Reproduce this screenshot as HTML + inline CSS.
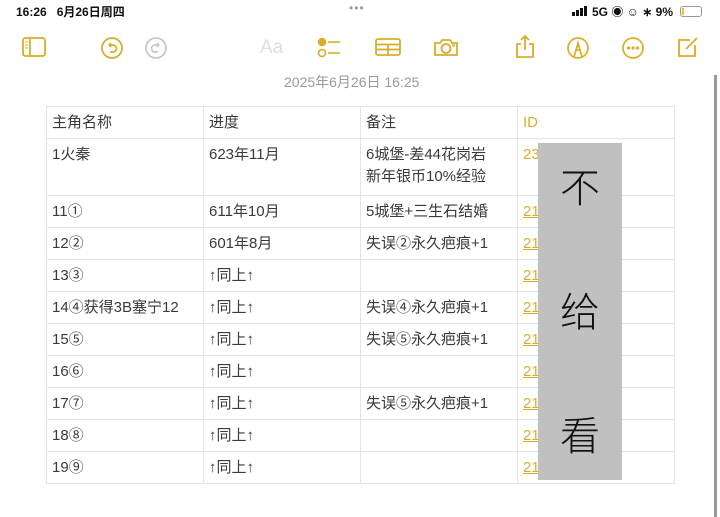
<!DOCTYPE html>
<html><head><meta charset="utf-8"><style>
*{margin:0;padding:0;box-sizing:border-box}
body{width:720px;height:517px;background:#fff;position:relative;overflow:hidden;font-family:"Liberation Sans","Noto Sans CJK SC",sans-serif;color:#333}
.abs{position:absolute}
table{position:absolute;left:46px;top:106px;border-collapse:collapse;font-size:15px;table-layout:fixed;width:628px}
td{border:1px solid #e4e4e4;width:157px;vertical-align:top;padding:5px 5px 0 5px;height:32px;line-height:22px;color:#3a3a3a}
td.id{color:#d9ad2a}
td.id u{text-decoration:underline;text-decoration-color:#d9ad2a}
svg{position:absolute}
</style></head><body>
<div class="abs" style="left:16px;top:3px;font-size:12px;font-weight:bold;color:#111">16:26&nbsp;&nbsp; 6月26日周四</div>
<div class="abs" style="left:349px;top:1px;font-size:12px;color:#999;letter-spacing:1px">•••</div>
<svg style="left:572px;top:6px" width="17" height="10" viewBox="0 0 17 10" fill="#111"><rect x="0" y="6" width="3" height="4"/><rect x="4" y="4" width="3" height="6"/><rect x="8" y="2" width="3" height="8"/><rect x="12" y="0" width="3" height="10"/></svg>
<div class="abs" style="left:592px;top:3px;font-size:12px;font-weight:bold;color:#111">5G ◉ ☺ ∗ 9%</div>
<div class="abs" style="left:680px;top:6px;width:22px;height:11px;border:1px solid #999;border-radius:3px"><div style="width:2px;height:7px;margin:1px;background:#f0c020"></div></div>
<svg style="left:20px;top:36px" width="28" height="22" viewBox="0 0 28 22" fill="none" stroke="#d9ad2a" stroke-width="1.8"><rect x="3" y="2" width="22" height="18" rx="2.5"/><line x1="10" y1="2" x2="10" y2="20"/><line x1="5" y1="6" x2="8" y2="6" stroke-width="1"/><line x1="5" y1="9" x2="8" y2="9" stroke-width="1"/><line x1="5" y1="12" x2="8" y2="12" stroke-width="1"/></svg>
<svg style="left:100px;top:36px" width="24" height="24" viewBox="0 0 24 24" fill="none" stroke="#d9ad2a" stroke-width="1.8"><circle cx="12" cy="12" r="10"/><path d="M9 9h4a3.5 3.5 0 0 1 0 7h-3M9 9l2-2M9 9l2 2"/></svg>
<svg style="left:144px;top:36px" width="24" height="24" viewBox="0 0 24 24" fill="none" stroke="#c8c8c8" stroke-width="1.8"><circle cx="12" cy="12" r="10"/><path d="M15 9h-4a3.5 3.5 0 0 0 0 7h3M15 9l-2-2M15 9l-2 2"/></svg>
<div class="abs" style="left:260px;top:37px;font-size:19px;color:#ddd">Aa</div>
<svg style="left:316px;top:36px" width="28" height="24" viewBox="0 0 28 24" fill="none" stroke="#d9ad2a" stroke-width="1.6"><circle cx="6" cy="6" r="3.5" fill="#d9ad2a"/><circle cx="6" cy="17" r="3.5"/><line x1="12" y1="6" x2="24" y2="6"/><line x1="12" y1="17" x2="24" y2="17"/></svg>
<svg style="left:374px;top:36px" width="28" height="22" viewBox="0 0 28 22" fill="none" stroke="#d9ad2a" stroke-width="1.8"><rect x="2" y="3" width="24" height="16" rx="2"/><line x1="2" y1="8.5" x2="26" y2="8.5"/><line x1="2" y1="13.5" x2="26" y2="13.5"/><line x1="14" y1="8.5" x2="14" y2="19"/></svg>
<svg style="left:432px;top:36px" width="28" height="22" viewBox="0 0 28 22" fill="none" stroke="#d9ad2a" stroke-width="1.8"><path d="M3 7h5l2-3h8l2 3h5v12H3z"/><circle cx="14" cy="12.5" r="4.5"/><circle cx="21.5" cy="9.5" r=".5"/></svg>
<svg style="left:514px;top:34px" width="22" height="26" viewBox="0 0 22 26" fill="none" stroke="#d9ad2a" stroke-width="1.8"><path d="M7 10H3v13h16V10h-4M11 2v14M7 6l4-4 4 4"/></svg>
<svg style="left:566px;top:36px" width="24" height="24" viewBox="0 0 24 24" fill="none" stroke="#d9ad2a" stroke-width="1.7"><circle cx="12" cy="12" r="10"/><path d="M8 21l4-14 4 14M10 14h4"/></svg>
<svg style="left:621px;top:36px" width="24" height="24" viewBox="0 0 24 24" fill="none" stroke="#d9ad2a" stroke-width="1.7"><circle cx="12" cy="12" r="10"/><circle cx="7.5" cy="12" r=".8" fill="#d9ad2a"/><circle cx="12" cy="12" r=".8" fill="#d9ad2a"/><circle cx="16.5" cy="12" r=".8" fill="#d9ad2a"/></svg>
<svg style="left:676px;top:34px" width="24" height="26" viewBox="0 0 24 26" fill="none" stroke="#d9ad2a" stroke-width="1.8"><path d="M14 6H3v16h16V11"/><path d="M10 15L21 4"/></svg>
<div class="abs" style="left:284px;top:72px;font-size:14px;color:#999">2025年6月26日 16:25</div>
<div class="abs" style="left:714px;top:75px;width:3px;height:442px;background:#999"></div>
<table>
<tr><td>主角名称</td><td>进度</td><td>备注</td><td class="id">ID</td></tr>
<tr><td style="height:57px">1火秦</td><td>623年11月</td><td>6城堡-差44花岗岩<br>新年银币10%经验</td><td class="id">23</td></tr>
<tr><td>11①</td><td>611年10月</td><td>5城堡+三生石结婚</td><td class="id"><u>21</u></td></tr>
<tr><td>12②</td><td>601年8月</td><td>失误②永久疤痕+1</td><td class="id"><u>21</u></td></tr>
<tr><td>13③</td><td>↑同上↑</td><td></td><td class="id"><u>21</u></td></tr>
<tr><td>14④获得3B塞宁12</td><td>↑同上↑</td><td>失误④永久疤痕+1</td><td class="id"><u>21</u></td></tr>
<tr><td>15⑤</td><td>↑同上↑</td><td>失误⑤永久疤痕+1</td><td class="id"><u>21</u></td></tr>
<tr><td>16⑥</td><td>↑同上↑</td><td></td><td class="id"><u>21</u></td></tr>
<tr><td>17⑦</td><td>↑同上↑</td><td>失误⑤永久疤痕+1</td><td class="id"><u>21</u></td></tr>
<tr><td>18⑧</td><td>↑同上↑</td><td></td><td class="id"><u>21</u></td></tr>
<tr><td>19⑨</td><td>↑同上↑</td><td></td><td class="id"><u>21</u></td></tr>
</table>
<div class="abs" style="left:538px;top:143px;width:84px;height:337px;background:#c0c0c0;font-size:40px;color:#111;text-align:center;font-weight:300">
<div class="abs" style="left:0;width:84px;top:18px;line-height:56px">不</div>
<div class="abs" style="left:0;width:84px;top:142px;line-height:56px">给</div>
<div class="abs" style="left:0;width:84px;top:266px;line-height:56px">看</div>
</div>
</body></html>
